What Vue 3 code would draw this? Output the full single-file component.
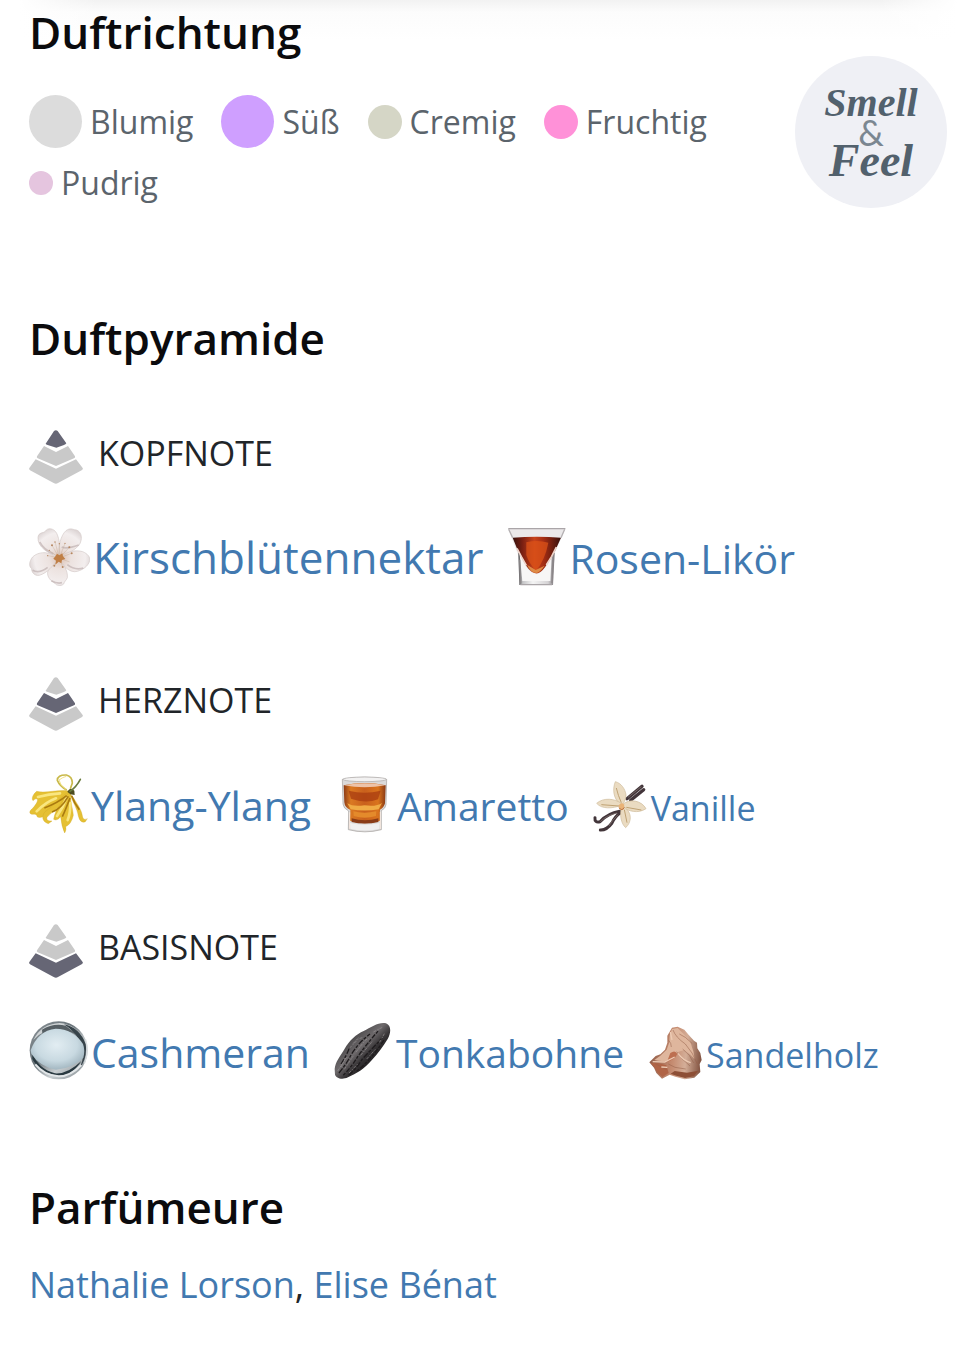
<template>
  <main class="fragrance">
    <section class="direction">
      <div class="direction-main">
        <h2>Duftrichtung</h2>
        <ul class="accords">
          <li v-for="a in accords" :key="a.name">
            <span class="dot" :class="[a.size, a.tone]"></span>{{ a.name }}
          </li>
        </ul>
      </div>
      <div class="badge">
        <span>Smell</span>
        <span class="amp">&amp;</span>
        <span class="feel">Feel</span>
      </div>
    </section>

    <section class="pyramid">
      <h2>Duftpyramide</h2>
      <div v-for="(tier, i) in tiers" :key="tier.title" class="tier">
        <h3>
          <svg class="tier-icon" viewBox="27 31 162 162" aria-hidden="true">
            <path v-for="(d, n) in layers" :key="n" :d="d" :class="{ active: n === i }" />
          </svg>
          {{ tier.title }}
        </h3>
        <div class="notes">
          <a v-for="note in tier.notes" :key="note.name" href="#" class="note" :class="note.size">
            <svg class="note-icon" :viewBox="note.box" aria-hidden="true">
              <template v-if="note.icon === 'blossom'">
                <defs>
                  <radialGradient id="petal" gradientUnits="userSpaceOnUse" cx="120" cy="418" r="95">
                    <stop offset="0" stop-color="#dcc0b2" />
                    <stop offset=".35" stop-color="#ece2df" />
                    <stop offset=".8" stop-color="#f3eeee" />
                    <stop offset="1" stop-color="#ddd5d5" />
                  </radialGradient>
                </defs>
                <g fill="url(#petal)" stroke="#d3c8c7" stroke-width="2">
                  <path d="M112 412C85 405 52 385 54 356C56 340 70 344 76 338C82 326 102 328 110 344C119 362 121 388 118 412Z" />
                  <path d="M118 412C114 385 122 350 138 336C150 327 158 332 163 333C180 334 187 350 183 366C179 388 148 402 124 414Z" />
                  <path d="M120 418C137 398 167 393 188 399C202 405 211 414 209 426C204 444 188 453 172 458C151 464 130 444 120 424Z" />
                  <path d="M116 422C131 436 144 456 142 477C139 486 133 487 131 496C122 504 108 500 105 494C92 487 81 475 83 460C86 444 101 430 116 422Z" />
                  <path d="M114 420C99 441 84 462 58 470C42 473 34 458 35 450C27 444 28 432 32 425C36 411 55 401 76 402C93 404 105 411 114 420Z" />
                </g>
                <g class="soft" fill="none" stroke="#b9a9a9" stroke-width="5" opacity=".6">
                  <path d="M59 370Q72 394 100 405M125 385Q140 392 176 379M142 438Q165 456 190 448M94 486Q112 496 126 492M38 455Q58 466 83 446" />
                </g>
                <g fill="none" stroke="#bda187" stroke-width="1">
                  <path d="M118 418L96 380M118 418L105 370M118 418L118 375M118 418L135 374M118 418L147 387M118 418L154 404M118 418L90 397M118 418L84 411M118 418L103 440M118 418L128 444M118 418L149 430" />
                </g>
                <path class="soft" d="M105 414L111 405L118 410L127 404L129 413L136 421L126 424L124 434L116 429L106 438L108 426L100 420Z" fill="#c07f45" />
                <g fill="#b58660">
                  <circle cx="96" cy="380" r="3" /><circle cx="105" cy="370" r="2" />
                  <circle cx="118" cy="375" r="2" /><circle cx="135" cy="374" r="2" />
                  <circle cx="148" cy="386" r="3" /><circle cx="155" cy="404" r="3" />
                  <circle cx="88" cy="395" r="2" /><circle cx="83" cy="411" r="2" />
                  <circle cx="103" cy="441" r="3" /><circle cx="128" cy="445" r="3" />
                </g>
              </template>

              <template v-else-if="note.icon === 'shot'">
                <defs>
                  <linearGradient id="liqueur" x1="0" x2="1">
                    <stop offset="0" stop-color="#35110d" /><stop offset=".2" stop-color="#7a1f12" />
                    <stop offset=".45" stop-color="#c8431b" /><stop offset=".65" stop-color="#a22c13" />
                    <stop offset="1" stop-color="#35100c" />
                  </linearGradient>
                  <linearGradient id="shotGlass" x1="0" x2="1">
                    <stop offset="0" stop-color="#4d4b4d" /><stop offset=".12" stop-color="#c5c5c7" />
                    <stop offset=".4" stop-color="#f4f4f4" /><stop offset=".82" stop-color="#d5d3d5" />
                    <stop offset="1" stop-color="#777276" />
                  </linearGradient>
                </defs>
                <path d="M53 56H226L193 130L188 226H87L84 137Z" fill="#ebe9ea" />
                <path d="M84 130H193L188 226H87Z" fill="url(#shotGlass)" />
                <path d="M67 84Q139 78 212 84L195 122Q183 146 164 173Q148 196 132 190Q114 183 103 159L83 124Z" fill="url(#liqueur)" />
                <path class="soft" d="M108 98Q142 90 174 99Q165 148 137 184Q115 159 108 136Z" fill="#dc5218" opacity=".75" />
                <path class="soft" d="M88 134L101 158Q116 192 138 194Q157 193 184 142L180 214H96Z" fill="#f7f6f6" />
                <path class="soft" d="M110 165Q122 190 138 190Q149 188 163 168L136 181Z" fill="#de8b46" />
                <path d="M80 116L93 141L108 167M198 112L184 140L168 166" fill="none" stroke="#f0d5cb" stroke-width="5" />
                <path d="M88 150L91 220M188 150L185 220" fill="none" stroke="#8b8789" stroke-width="4" />
                <path d="M54 57H225M90 225H185" stroke="#aaa5a8" stroke-width="4" />
                <path d="M55 59L67 84M223 59L212 84" stroke="#b5b1b3" stroke-width="4" />
              </template>

              <template v-else-if="note.icon === 'ylang'">
                <path d="M140 386Q119 374 112 357Q112 340 139 341Q157 346 157 365L151 382" fill="none" stroke="#c9b94a" stroke-width="5" />
                <path d="M138 384Q119 371 117 356Q129 347 139 345" fill="none" stroke="#f2e286" stroke-width="3" />
                <g fill="#e5c033" stroke="#cfa728" stroke-width="1">
                  <path d="M147 389C115 383 78 397 50 390C38 400 34 412 39 418C52 406 62 414 38 441C27 449 27 457 36 459C54 456 48 465 54 468C68 471 85 460 101 440C111 430 143 414 149 396Z" />
                  <path d="M143 393C116 412 101 435 75 451C64 465 66 481 85 487L96 479Q77 480 81 468C99 447 127 438 148 399Z" />
                  <path d="M145 395C132 416 106 440 101 474Q111 480 122 466Q125 496 134 515Q140 505 137 496Q154 489 160 462C158 437 149 419 153 397Z" />
                  <path d="M151 399C157 422 172 441 175 464Q181 488 196 481L202 472Q193 479 188 468C185 444 173 431 162 412Z" />
                </g>
                <g class="soft" fill="none" stroke="#f9e680" stroke-width="8" stroke-linecap="round">
                  <path d="M120 396Q86 398 54 407M108 411Q78 422 50 450M139 410Q130 438 111 464M151 425Q151 458 143 476" />
                </g>
                <g class="soft" fill="none" stroke="#a97a10" stroke-width="5">
                  <path d="M140 403Q113 425 73 440M145 405Q122 444 96 452M150 410Q136 447 127 466M155 403Q163 426 178 445" />
                </g>
                <path d="M142 391Q151 375 163 388L164 401L151 399Z" fill="#4c4b20" />
                <path d="M150 390Q169 377 181 354" fill="none" stroke="#687a3d" stroke-width="5" stroke-linecap="round" />
              </template>

              <template v-else-if="note.icon === 'tumbler'">
                <defs>
                  <linearGradient id="amber" x1="0" x2="1">
                    <stop offset="0" stop-color="#8c3b16" /><stop offset=".17" stop-color="#db7922" />
                    <stop offset=".5" stop-color="#c9601d" /><stop offset=".82" stop-color="#da741d" />
                    <stop offset="1" stop-color="#8a3914" />
                  </linearGradient>
                </defs>
                <path d="M43 56Q110 43 176 56L174 132Q173 143 160 150L160 207Q111 220 61 207L62 151Q46 143 45 130Z" fill="#dbdada" stroke="#a5a09d" stroke-width="2" />
                <ellipse cx="110" cy="56" rx="65" ry="7" fill="#f2f1f1" stroke="#aaa6a4" stroke-width="2" />
                <path d="M47 74Q110 60 173 74L171 128Q168 141 156 147L156 180Q110 195 66 180L67 148Q50 140 49 125Z" fill="url(#amber)" />
                <path d="M48 74Q110 62 172 74Q110 86 48 74Z" fill="#edc3a9" />
                <path class="soft" d="M62 90Q110 102 158 90L150 116Q114 130 69 114Z" fill="#a93c10" opacity=".75" />
                <path class="soft" d="M58 128Q75 139 109 134Q145 139 162 127L152 146Q110 153 68 146Z" fill="#f0ab45" />
                <path class="soft" d="M76 152Q108 160 145 152L144 166Q110 176 77 166Z" fill="#e48a2b" />
                <path class="soft" d="M71 173Q111 185 151 173L151 184Q110 193 71 184Z" fill="#893b17" />
                <path d="M66 187Q110 197 155 187L154 204Q111 215 67 204Z" fill="#f0efef" />
                <path d="M65 155V204M157 153V205" fill="none" stroke="#f7e9df" stroke-width="3" />
              </template>

              <template v-else-if="note.icon === 'vanilla'">
                <g fill="none" stroke="#42353a" stroke-linecap="round">
                  <path d="M892 112L937 75M903 117L942 85" stroke-width="10" />
                  <path d="M870 150Q835 156 811 181Q794 185 796 169" stroke-width="9" />
                  <path d="M872 154Q855 166 847 185Q831 207 812 206" stroke-width="9" />
                </g>
                <path d="M895 108L935 76M862 155Q830 162 812 181M865 160Q846 179 838 194" fill="none" stroke="#8d7b77" stroke-width="2" />
                <g fill="#eadbc1" stroke="#cdb999" stroke-width="2">
                  <path d="M876 132C848 113 849 80 857 61C874 65 887 83 889 101C889 117 881 126 876 132Z" />
                  <path d="M875 132C849 142 816 144 801 126C821 108 856 111 876 127Z" />
                  <path d="M879 129C900 111 935 117 949 142C925 158 895 150 878 136Z" />
                  <path d="M876 135C869 160 874 187 888 199C904 185 911 155 881 135Z" />
                </g>
                <g class="soft" fill="none" stroke="#bfa274" stroke-width="3">
                  <path d="M860 80Q865 102 875 124M815 130L868 134M890 138L935 146M884 145L892 184" />
                </g>
                <path d="M867 132Q875 121 884 130L882 144Q875 149 869 143Z" fill="#e9b377" />
                <path d="M868 139Q877 151 884 138" fill="none" stroke="#ba713f" stroke-width="3" />
              </template>

              <template v-else-if="note.icon === 'drop'">
                <defs>
                  <radialGradient id="drop" cx=".48" cy=".4" r=".6">
                    <stop offset="0" stop-color="#e2edf2" /><stop offset=".65" stop-color="#c8d9e1" />
                    <stop offset="1" stop-color="#a3b7c1" />
                  </radialGradient>
                  <linearGradient id="dropRim" x1="0" y1="0" x2="1" y2="1">
                    <stop offset="0" stop-color="#8d959a" /><stop offset=".4" stop-color="#687278" />
                    <stop offset=".65" stop-color="#c8ced1" /><stop offset="1" stop-color="#7e878c" />
                  </linearGradient>
                </defs>
                <circle cx="116" cy="424" r="87" fill="url(#dropRim)" />
                <path class="soft" d="M40 393Q63 345 119 342Q170 347 191 391Q166 359 116 357Q71 359 40 393Z" fill="#ced2d4" />
                <path class="soft" d="M66 362Q100 341 137 350L169 376Q118 353 67 373Z" fill="#565f64" />
                <path class="soft" d="M132 346Q179 356 197 405Q203 449 177 480Q200 438 181 398Q163 366 132 346Z" fill="#36434a" />
                <path class="soft" d="M37 432Q55 480 105 493Q143 496 184 456Q156 502 115 500Q62 494 37 450Z" fill="#293940" />
                <path d="M32 424Q53 365 107 359Q160 360 189 405Q196 424 190 446Q160 477 108 482Q58 472 34 434Z" fill="url(#drop)" />
                <path class="soft" d="M46 466Q72 498 115 502Q150 503 184 468" fill="none" stroke="#e2e6e8" stroke-width="6" />
                <path d="M197 392Q207 427 194 462" fill="none" stroke="#dce0e2" stroke-width="4" />
              </template>

              <template v-else-if="note.icon === 'bean'">
                <defs>
                  <linearGradient id="bean" x1=".25" y1=".25" x2=".75" y2=".75">
                    <stop offset="0" stop-color="#454345" /><stop offset=".4" stop-color="#6e6a6c" />
                    <stop offset=".65" stop-color="#373436" /><stop offset="1" stop-color="#171517" />
                  </linearGradient>
                </defs>
                <path d="M22 181C24 159 39 142 52 120C66 96 87 76 109 67C132 55 156 39 176 44C194 51 190 75 181 91C167 114 153 133 133 155C111 181 87 195 62 206C43 215 26 208 23 198Z" fill="url(#bean)" />
                <g fill="none" stroke="#1e1b1d" stroke-width="4">
                  <path d="M35 193Q58 165 72 137Q95 100 128 76M64 200Q90 177 105 151Q136 118 165 88M41 166Q59 139 67 115" stroke-dasharray="17 4 9 5" />
                  <path d="M48 200Q73 174 91 144Q117 107 155 64M88 187Q128 158 172 91" stroke-dasharray="9 5 14 4" />
                </g>
                <g fill="none" stroke="#969193" stroke-width="2">
                  <path d="M31 187L54 151L62 143M51 182L77 143M67 118L94 90L105 87M86 130L113 95L124 89M65 193L91 166M100 140L136 97M118 151L145 121M138 70L165 56M157 101L171 75M77 105L93 87M41 175L56 145" stroke-dasharray="9 4 5 3" />
                </g>
              </template>

              <template v-else>
                <defs>
                  <linearGradient id="wood" x1="0" y1=".5" x2="1" y2=".6">
                    <stop offset="0" stop-color="#905c48" /><stop offset=".45" stop-color="#c58b70" />
                    <stop offset=".7" stop-color="#d4ae98" /><stop offset="1" stop-color="#80513f" />
                  </linearGradient>
                </defs>
                <path d="M58 158L77 139L91 134L105 120L112 99L112 78L126 54L143 51L163 60L177 77L192 93L201 99L202 116L211 130L215 151L209 163L211 187L193 204L164 209L136 201L119 195L96 207L79 190L72 174Z" fill="url(#wood)" />
                <path class="soft" d="M126 58L143 55L162 74L180 95L190 125L194 149L180 134L163 121L146 126L133 141L107 155L85 153L73 151L91 138L110 120L118 98L119 78Z" fill="#dfb69d" />
                <path class="soft" d="M62 160L80 159L109 167L116 190L97 202L82 188L74 174Z" fill="#b06446" />
                <path class="soft" d="M122 192L134 184L171 189L205 183L192 200L165 205L139 198Z" fill="#8d4f36" />
                <path class="soft" d="M121 130Q136 119 142 133Q134 150 111 156Z" fill="#bd6f50" />
                <g fill="none" stroke="#966149" stroke-width="2" opacity=".8">
                  <path d="M129 61Q137 83 166 103Q188 127 202 163M116 92Q124 100 124 112M148 73Q165 79 187 102M140 126Q151 146 180 169M115 163L135 173L167 178M76 162L110 180M158 118L178 137L191 160" />
                </g>
                <path class="soft" d="M68 156L104 157L134 142M144 131Q158 151 182 159M121 67L126 91M94 172L112 173" fill="none" stroke="#edcbb4" stroke-width="4" />
              </template>
            </svg>
            <span>{{ note.name }}</span>
          </a>
        </div>
      </div>
    </section>

    <section class="perfumers">
      <h2>Parfümeure</h2>
      <p><a href="#">Nathalie Lorson</a>, <a href="#">Elise Bénat</a></p>
    </section>
  </main>
</template>

<script setup>
const accords = [
  { name: 'Blumig', size: 'large', tone: 'floral' },
  { name: 'Süß', size: 'large', tone: 'sweet' },
  { name: 'Cremig', size: 'medium', tone: 'creamy' },
  { name: 'Fruchtig', size: 'medium', tone: 'fruity' },
  { name: 'Pudrig', size: 'small', tone: 'powdery' },
]

// pyramid layers, top to bottom
const layers = [
  'M102 34Q108 29 113 34L139 71Q137 74 132 76L109 84L83 76Q78 75 77 72Z',
  'M72 79L108 97L144 79L165 110Q167 114 162 116L108 139L53 116Q49 114 51 110Z',
  'M47 119L108 147L168 119L188 145Q190 149 185 152L114 190Q108 195 101 190L30 152Q26 149 28 145Z',
]

const tiers = [
  {
    title: 'KOPFNOTE',
    notes: [
      { name: 'Kirschblütennektar', size: 'xl', icon: 'blossom', box: '27 325 183 177' },
      { name: 'Rosen-Likör', size: 'lg', icon: 'shot', box: '50 52 177 177' },
    ],
  },
  {
    title: 'HERZNOTE',
    notes: [
      { name: 'Ylang-Ylang', size: 'lg', icon: 'ylang', box: '27 338 177 177' },
      { name: 'Amaretto', size: 'md', icon: 'tumbler', box: '21 40 177 177' },
      { name: 'Vanille', size: 'sm', icon: 'vanilla', box: '790 50 165 165' },
    ],
  },
  {
    title: 'BASISNOTE',
    notes: [
      { name: 'Cashmeran', size: 'lg', icon: 'drop', box: '27 336 177 177' },
      { name: 'Tonkabohne', size: 'md', icon: 'bean', box: '20 37 177 177' },
      { name: 'Sandelholz', size: 'sm', icon: 'wood', box: '54 46 165 165' },
    ],
  },
]
</script>

<style>
body { margin: 0; background: #fff; }
</style>

<style scoped>
.fragrance {
  padding: 2px 30px 36px 29px;
  font-family: "Open Sans", "Noto Sans", sans-serif;
  color: #212529;
  background:
    linear-gradient(90deg, #fff 2%, transparent 10%, transparent 90%, #fff 98%) no-repeat 0 0 / 100% 40px,
    linear-gradient(#f2f2f2, #fcfcfc 12px, #fff 40px) no-repeat 0 0 / 100% 40px;
}
h2 { margin: 0; font-size: 44px; line-height: 60px; font-weight: 600; color: #0b0b0d; }
a { color: #4279b0; text-decoration: none; }

.direction { display: flex; justify-content: space-between; align-items: flex-start; }
.direction-main { flex: 1; }
.accords {
  display: flex; flex-wrap: wrap; gap: 12px 28px;
  margin: 33px 0 0; padding: 0; list-style: none;
  font-size: 32px; line-height: 46px; color: #5b646c;
}
.accords li { display: flex; align-items: center; gap: 8px; }
.dot { border-radius: 50%; }
.dot.large { width: 53px; height: 53px; }
.dot.medium { width: 34px; height: 34px; }
.dot.small { width: 24px; height: 24px; }
.floral { background: #dcdcdc; }
.sweet { background: #cf9fff; }
.creamy { background: #d5d6c6; }
.fruity { background: #ff91d8; }
.powdery { background: #e5c5df; }

.badge {
  display: flex; flex-direction: column; align-items: center; justify-content: center;
  width: 152px; height: 152px; margin-top: 54px; border-radius: 50%;
  background: #eff0f5; color: #52616d;
  font-family: "Liberation Serif", serif; font-size: 40px; line-height: 30px;
  font-weight: 700; font-style: italic;
}
.badge .amp {
  font-family: Lato, sans-serif; font-size: 36px; line-height: 28px;
  font-weight: 400; font-style: normal; color: #7b8791;
}
.badge .feel { font-size: 46px; }

.pyramid { margin-top: 100px; }
.tier { margin-top: 91px; }
h2 + .tier { margin-top: 62px; }
h3 { display: flex; align-items: flex-start; gap: 15px; margin: 0; font-size: 34px; line-height: 46px; font-weight: 400; }
.tier-icon { width: 54px; height: 54px; fill: #c9c9c9; }
.tier-icon .active { fill: #666675; }
.notes { display: flex; flex-wrap: wrap; align-items: baseline; gap: 12px 24px; margin-top: 43px; }
.note { line-height: 44px; white-space: nowrap; }
.note-icon { width: 59px; height: 59px; margin-right: 3px; vertical-align: -12px; }
.soft { filter: blur(2px); }
.xl { font-size: 44px; }
.xl .note-icon { width: 61px; }
.lg { font-size: 41px; }
.md { font-size: 39px; }
.sm { font-size: 34px; }
.sm .note-icon { width: 55px; height: 55px; }

.perfumers { margin-top: 97px; }
.perfumers p { margin: 22px 0 0; font-size: 36px; line-height: 52px; }
</style>
